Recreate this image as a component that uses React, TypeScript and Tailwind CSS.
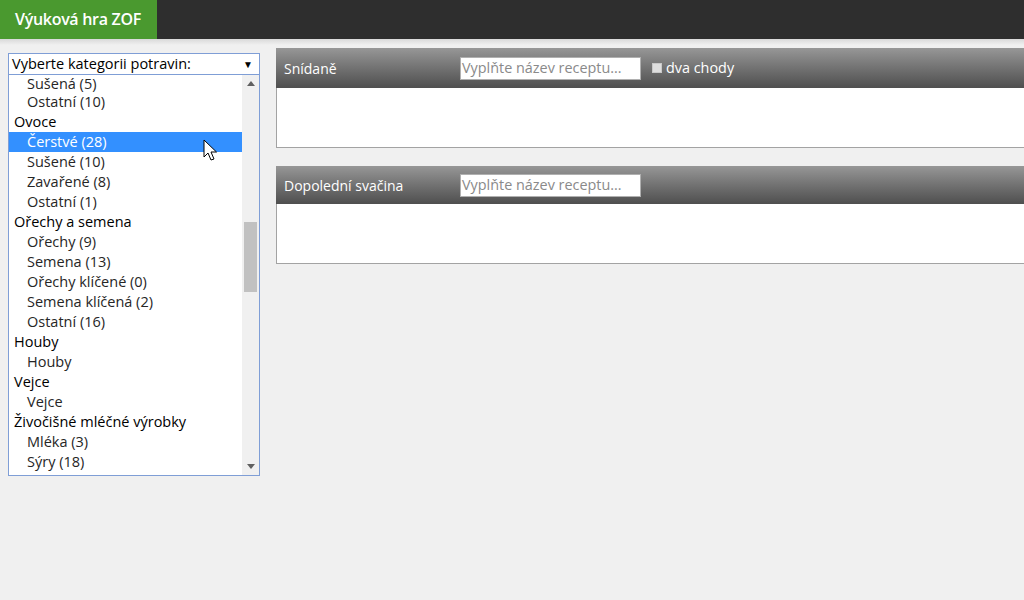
import React from "react";

type Row = { label: string; group?: boolean; selected?: boolean };

const rows: Row[] = [
  { label: "Sušená (5)" },
  { label: "Ostatní (10)" },
  { label: "Ovoce", group: true },
  { label: "Čerstvé (28)", selected: true },
  { label: "Sušené (10)" },
  { label: "Zavařené (8)" },
  { label: "Ostatní (1)" },
  { label: "Ořechy a semena", group: true },
  { label: "Ořechy (9)" },
  { label: "Semena (13)" },
  { label: "Ořechy klíčené (0)" },
  { label: "Semena klíčená (2)" },
  { label: "Ostatní (16)" },
  { label: "Houby", group: true },
  { label: "Houby" },
  { label: "Vejce", group: true },
  { label: "Vejce" },
  { label: "Živočišné mléčné výrobky", group: true },
  { label: "Mléka (3)" },
  { label: "Sýry (18)" },
];

function Panel({ title, headerH, checkbox }: { title: string; headerH: string; checkbox?: boolean }) {
  return (
    <div className="flex flex-col">
      <div
        className={`${headerH} flex items-center bg-gradient-to-b from-[#979797] to-[#4f4f4f] pl-[8px]`}
      >
        <span className="w-[176px] text-[14px] text-white">{title}</span>
        <div className="flex h-[23px] w-[181px] items-center border border-[#b0b0b0] bg-white px-[1px] text-[14.4px] text-[#8a8a8a]">
          Vyplňte název receptu...
        </div>
        {checkbox && (
          <div className="ml-[11px] flex items-center gap-[4px]">
            <div className="h-[10px] w-[10px] border border-[#c8c8c8] bg-[#dedede]" />
            <span className="text-[14.4px] text-white">dva chody</span>
          </div>
        )}
      </div>
      <div className="h-[60px] border-b border-l border-[#a3a3a3] bg-white" />
    </div>
  );
}

export default function App() {
  return (
    <div
      className="relative h-[600px] w-[1024px] overflow-hidden bg-[#f0f0f0]"
      style={{ fontFamily: '"Open Sans", "Noto Sans", sans-serif' }}
    >
      <header className="flex h-[39px] bg-[#2e2e2e]">
        <div className="flex w-[157px] items-center bg-[#4a992f] pl-[15px] pb-[1px] text-[16px] font-semibold tracking-[-0.3px] text-white">
          Výuková hra ZOF
        </div>
      </header>
      <div className="h-[6px] bg-gradient-to-b from-[#d9d9d9] to-[#f0f0f0]" />

      <div className="flex gap-[16px] pl-[8px]">
        <div className="mt-[8px] flex w-[252px] flex-col">
          <div className="flex h-[22px] items-center justify-between border border-[#7f9ed6] bg-white pl-[3px] pr-[6px] text-[14.5px] text-black">
            <span>Vyberte kategorii potravin:</span>
            <span className="text-[10px]">▼</span>
          </div>
          <div className="relative flex h-[401px] border-x border-b border-[#7f9ed6] bg-white">
            <div className="flex-1 overflow-hidden">
              <div className="flex flex-col">
                {rows.map((r, i) => (
                  <div
                    key={i}
                    className={`flex items-center text-[14.5px] ${
                      i === 0 ? "h-[17px] leading-[17px]" : "h-[20px] leading-[20px]"
                    } ${
                      r.group ? "pl-[5px] font-medium text-black" : "pl-[18px] text-[#262626]"
                    } ${r.selected ? "bg-[#3390ff] text-white" : ""}`}
                  >
                    {r.label}
                  </div>
                ))}
              </div>
            </div>
            <div className="flex w-[17px] flex-col items-center bg-[#f0f0f0]">
              <div className="flex h-[17px] items-center justify-center">
                <svg width="8" height="5" viewBox="0 0 8 5">
                  <path d="M0 5 L4 0 L8 5 Z" fill="#606060" />
                </svg>
              </div>
              <div className="mt-[130px] h-[70px] w-[13px] bg-[#c1c1c1]" />
              <div className="flex-1" />
              <div className="flex h-[17px] items-center justify-center">
                <svg width="8" height="5" viewBox="0 0 8 5">
                  <path d="M0 0 L8 0 L4 5 Z" fill="#606060" />
                </svg>
              </div>
            </div>
          </div>
        </div>

        <div className="mt-[3px] flex flex-1 flex-col gap-[18px]">
          <Panel title="Snídaně" headerH="h-[40px]" checkbox />
          <Panel title="Dopolední svačina" headerH="h-[38px]" />
        </div>
      </div>

      <svg
        className="absolute left-[203px] top-[139px]"
        width="16"
        height="24"
        viewBox="0 0 16 24"
      >
        <path
          d="M1 1 L1 18 L5 14 L8 21 L11 20 L8 13 L13.5 13 Z"
          fill="#ffffff"
          stroke="#000000"
          strokeWidth="1"
          strokeLinejoin="round"
        />
      </svg>
    </div>
  );
}
